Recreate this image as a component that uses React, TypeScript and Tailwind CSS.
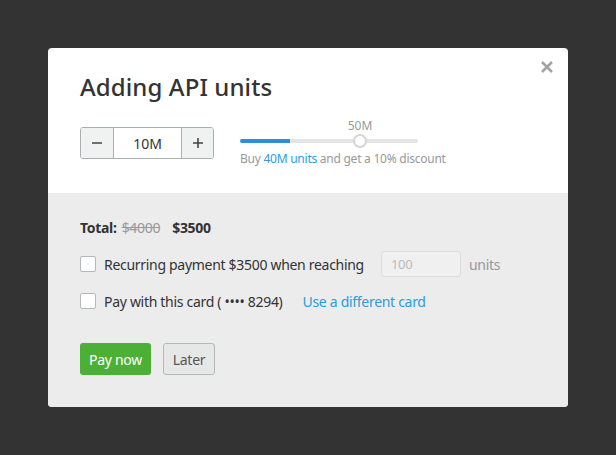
import { useState } from "react";

export default function App() {
  const [units, setUnits] = useState(10);
  const font = { fontFamily: '"Noto Sans", "Open Sans", sans-serif' };

  return (
    <div
      className="min-h-screen w-full bg-[#333333] flex items-start justify-center pt-12"
      style={font}
    >
      <div className="relative w-[520px] rounded-[4px] overflow-hidden bg-white">
        <button className="absolute right-[14px] top-[12px] text-[#a0a4a6]">
          <svg width="14" height="14" viewBox="0 0 14 14">
            <path
              d="M2 2 L12 12 M12 2 L2 12"
              stroke="currentColor"
              strokeWidth="2.6"
              strokeLinecap="butt"
            />
          </svg>
        </button>

        <div className="px-8 pt-[23px] pb-[26px]">
          <h1 className="text-[24px] leading-[32px] font-medium text-[#333333] tracking-[0.1px]">
            Adding API units
          </h1>

          <div className="mt-[24px] flex items-start">
            <div className="flex h-[32px] w-[134px] rounded-[3px] border border-[#aab0b2] overflow-hidden">
              <button
                onClick={() => setUnits(Math.max(0, units - 10))}
                className="w-[33px] bg-[#f0f2f2] border-r border-[#aab0b2] flex items-center justify-center text-[#444]"
              >
                <svg width="12" height="12" viewBox="0 0 12 12">
                  <path d="M1 6 H11" stroke="currentColor" strokeWidth="1.6" />
                </svg>
              </button>
              <div className="flex-1 flex items-center justify-center text-[14px] text-[#333]">
                {units}M
              </div>
              <button
                onClick={() => setUnits(units + 10)}
                className="w-[32px] bg-[#f0f2f2] border-l border-[#aab0b2] flex items-center justify-center text-[#444]"
              >
                <svg width="12" height="12" viewBox="0 0 12 12">
                  <path d="M1 6 H11 M6 1 V11" stroke="currentColor" strokeWidth="1.6" />
                </svg>
              </button>
            </div>

            <div className="ml-[26px] -mt-[9px]">
              <div className="relative w-[178px] h-[30px]">
                <div className="absolute left-[105px] top-0 w-[30px] text-center text-[12px] leading-[16px] text-[#999]">
                  50M
                </div>
                <div className="absolute left-0 right-0 top-[21px] h-[4px] rounded-full bg-[#e4e4e4]" />
                <div className="absolute left-0 top-[21px] h-[4px] w-[50px] rounded-l-full bg-[#2b8fdc]" />
                <div className="absolute left-[113px] top-[16px] w-[14px] h-[14px] rounded-full bg-white border-[2px] border-[#d6d6d6]" />
              </div>
              <p className="mt-[3px] text-[12px] leading-[16px] text-[#999] tracking-[-0.25px]">
                Buy <span className="text-[#2d9be0]">40M units</span> and get a 10% discount
              </p>
            </div>
          </div>
        </div>

        <div className="bg-[#ececec] px-8 pt-[25px] pb-[32px] text-[14px] text-[#333] tracking-[-0.3px]">
          <div className="flex items-center gap-[5px] leading-[20px]">
            <span className="font-bold">Total:</span>
            <span className="text-[#999] line-through">$4000</span>
            <span className="font-bold ml-[7px]">$3500</span>
          </div>

          <div className="mt-[13px] flex items-center h-[26px]">
            <span className="w-[16px] h-[16px] rounded-[2px] border border-[#b4b8ba] bg-white" />
            <span className="ml-[8px]">Recurring payment $3500 when reaching</span>
            <input
              placeholder="100"
              className="ml-[17px] w-[80px] h-[26px] px-[9px] rounded-[3px] border border-[#dcdcdc] bg-[#f0f0f0] text-[13px] placeholder:text-[#bbb] outline-none"
            />
            <span className="ml-[8px] text-[#999]">units</span>
          </div>

          <div className="mt-[13px] flex items-center h-[22px]">
            <span className="w-[16px] h-[16px] rounded-[2px] border border-[#b4b8ba] bg-white" />
            <span className="ml-[8px]">Pay with this card ( •••• 8294)</span>
            <a className="ml-[20px] text-[#2d9be0]" href="#">
              Use a different card
            </a>
          </div>

          <div className="mt-[31px] flex gap-[12px]">
            <button className="h-[32px] w-[71px] rounded-[3px] bg-[#4caf36] text-white text-[14px]">
              Pay now
            </button>
            <button className="h-[32px] w-[52px] rounded-[3px] bg-[#e6e8e8] border border-[#b4b8ba] text-[#555] text-[14px]">
              Later
            </button>
          </div>
        </div>
      </div>
    </div>
  );
}
